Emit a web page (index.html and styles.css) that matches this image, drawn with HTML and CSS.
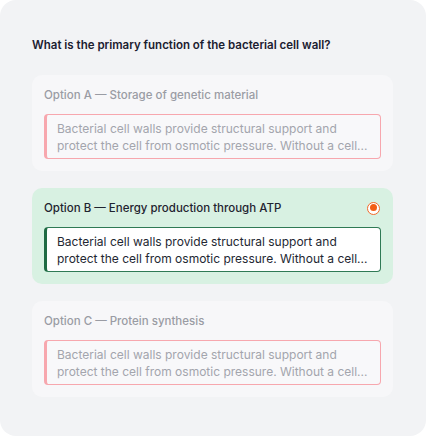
FILE: index.html
```html
<!DOCTYPE html>
<html lang="en">
<head>
    <meta charset="UTF-8">
    <meta name="viewport" content="width=device-width, initial-scale=1.0">
    <title>Quiz</title>
    <link rel="stylesheet" href="styles.css">
</head>
<body>
    <div class="panel">
        <h2 class="question">What is the primary function of the bacterial cell wall?</h2>

        <div class="option dim">
            <div class="option-head">
                <span class="option-title">Option A — Storage of genetic material</span>
            </div>
            <div class="answer wrong">Bacterial cell walls provide structural support and protect the cell from osmotic pressure. Without a cell...</div>
        </div>

        <div class="option picked">
            <div class="option-head">
                <span class="option-title">Option B — Energy production through ATP</span>
                <span class="radio"></span>
            </div>
            <div class="answer right">Bacterial cell walls provide structural support and protect the cell from osmotic pressure. Without a cell...</div>
        </div>

        <div class="option dim">
            <div class="option-head">
                <span class="option-title">Option C — Protein synthesis</span>
            </div>
            <div class="answer wrong">Bacterial cell walls provide structural support and protect the cell from osmotic pressure. Without a cell...</div>
        </div>
    </div>
</body>
</html>
```

FILE: styles.css
```css
* {
    margin: 0;
    padding: 0;
    box-sizing: border-box;
}

body {
    background: #ffffff;
    font-family: Inter, "Noto Sans", sans-serif;
}

/* outer panel */
.panel {
    background: #f2f3f5;
    border-radius: 16px;
    height: 436px;
    padding: 37px 33px 0 32px;
}

.question {
    font-size: 11.5px;
    font-weight: 600;
    color: #1b2030;
    line-height: 16px;
    margin-bottom: 22px;
}

/* option cards */
.option {
    border-radius: 10px;
    padding: 12px 12px 12px;
    margin-bottom: 17px;
}

.option.dim {
    background: #f7f7f9;
}

.option.picked {
    background: #d8f1e2;
}

.option-head {
    display: flex;
    justify-content: space-between;
    align-items: center;
    height: 16px;
    margin-bottom: 11px;
}

.option-title {
    font-size: 11.5px;
    font-weight: 500;
    line-height: 16px;
}

.dim .option-title {
    color: #9a9ca4;
}

.picked .option-title {
    color: #1f2430;
}

.radio {
    width: 13px;
    height: 13px;
    border-radius: 50%;
    border: 1.5px solid #f26a2a;
    background: #ffffff;
    position: relative;
    margin-right: 1px;
}

.radio::after {
    content: "";
    position: absolute;
    left: 1.5px;
    top: 1.5px;
    width: 7px;
    height: 7px;
    border-radius: 50%;
    background: #f25d14;
}

.answer {
    background: #ffffff;
    border-radius: 4px;
    border: 1px solid;
    border-left-width: 3px;
    padding: 5px 6px 4px 10px;
    font-size: 12px;
    line-height: 17px;
}

.answer.wrong {
    border-color: #f7a7ae;
    background: #f8f8fa;
    color: #a3a5ad;
}

.answer.right {
    border-color: #2f7a55;
    border-left-color: #1f6b43;
    color: #232732;
}
```
